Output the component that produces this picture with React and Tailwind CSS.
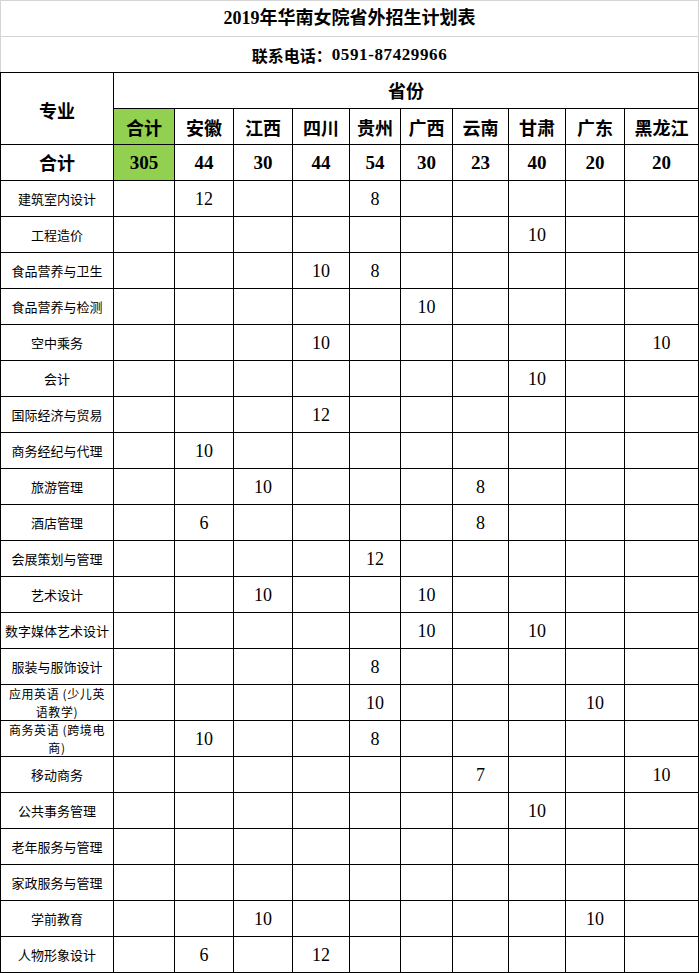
import React from "react";

const provinces = ["安徽", "江西", "四川", "贵州", "广西", "云南", "甘肃", "广东", "黑龙江"];
const totals = ["44", "30", "44", "54", "30", "23", "40", "20", "20"];

const rows = [
  { name: "建筑室内设计", v: { 0: "12", 3: "8" } },
  { name: "工程造价", v: { 6: "10" } },
  { name: "食品营养与卫生", v: { 2: "10", 3: "8" } },
  { name: "食品营养与检测", v: { 4: "10" } },
  { name: "空中乘务", v: { 2: "10", 8: "10" } },
  { name: "会计", v: { 6: "10" } },
  { name: "国际经济与贸易", v: { 2: "12" } },
  { name: "商务经纪与代理", v: { 0: "10" } },
  { name: "旅游管理", v: { 1: "10", 5: "8" } },
  { name: "酒店管理", v: { 0: "6", 5: "8" } },
  { name: "会展策划与管理", v: { 3: "12" } },
  { name: "艺术设计", v: { 1: "10", 4: "10" } },
  { name: "数字媒体艺术设计", v: { 4: "10", 6: "10" } },
  { name: "服装与服饰设计", v: { 3: "8" } },
  { name: ["应用英语 (少儿英", "语教学)"], v: { 3: "10", 7: "10" } },
  { name: ["商务英语 (跨境电", "商)"], v: { 0: "10", 3: "8" } },
  { name: "移动商务", v: { 5: "7", 8: "10" } },
  { name: "公共事务管理", v: { 6: "10" } },
  { name: "老年服务与管理", v: {} },
  { name: "家政服务与管理", v: {} },
  { name: "学前教育", v: { 1: "10", 7: "10" } },
  { name: "人物形象设计", v: { 0: "6", 2: "12" } },
];

export default function App() {
  return (
    <div className="w-[699px] bg-white text-black font-['Noto_Sans_CJK_SC',sans-serif]">
      <div className="h-[37px] border border-[#d4d4d4] flex items-center justify-center text-[18px] font-bold font-['Liberation_Serif','Noto_Sans_CJK_SC',serif]">
        2019年华南女院省外招生计划表
      </div>
      <div className="h-[35px] border-x border-[#d4d4d4] flex items-center justify-center text-[16px] font-bold">
        <span>联系电话：</span>
        <span className="text-[17px] tracking-[0.6px] font-['Liberation_Serif',serif]">0591-87429966</span>
      </div>
      <div className="grid bg-black gap-px p-px grid-cols-[112px_60px_58px_58px_56px_50px_51px_55px_56px_58px_73px] auto-rows-[35px]">
        <div className="row-span-2 bg-white flex items-center justify-center text-[18px] font-bold pt-[3px]">
          专业
        </div>
        <div className="col-span-10 bg-white flex items-center justify-center text-[18px] font-bold">
          省份
        </div>
        <div className="bg-[#92d050] flex items-center justify-center text-[18px] font-bold pt-[2px]">
          合计
        </div>
        {provinces.map((p) => (
          <div key={p} className="bg-white flex items-center justify-center text-[18px] font-bold pt-[2px]">
            {p}
          </div>
        ))}
        <div className="bg-white flex items-center justify-center text-[18px] font-bold">合计</div>
        <div className="bg-[#92d050] flex items-center justify-center text-[19px] font-bold pt-[2px] font-['Liberation_Serif',serif]">
          305
        </div>
        {totals.map((t, i) => (
          <div
            key={i}
            className="bg-white flex items-center justify-center text-[19px] font-bold pt-[2px] font-['Liberation_Serif',serif]"
          >
            {t}
          </div>
        ))}
        {rows.map((r, ri) => (
          <React.Fragment key={ri}>
            {Array.isArray(r.name) ? (
              <div className="bg-white flex flex-col items-center justify-center text-[12px] leading-[17.5px] tracking-[0.6px] text-center">
                <div>{r.name[0]}</div>
                <div>{r.name[1]}</div>
              </div>
            ) : (
              <div className="bg-white flex items-center justify-center text-[13px] text-center">{r.name}</div>
            )}
            <div className="bg-white" />
            {provinces.map((p, ci) => (
              <div
                key={ci}
                className="bg-white flex items-center justify-center text-[18px] pt-[2px] font-['Liberation_Serif',serif]"
              >
                {r.v[ci] || ""}
              </div>
            ))}
          </React.Fragment>
        ))}
      </div>
    </div>
  );
}
